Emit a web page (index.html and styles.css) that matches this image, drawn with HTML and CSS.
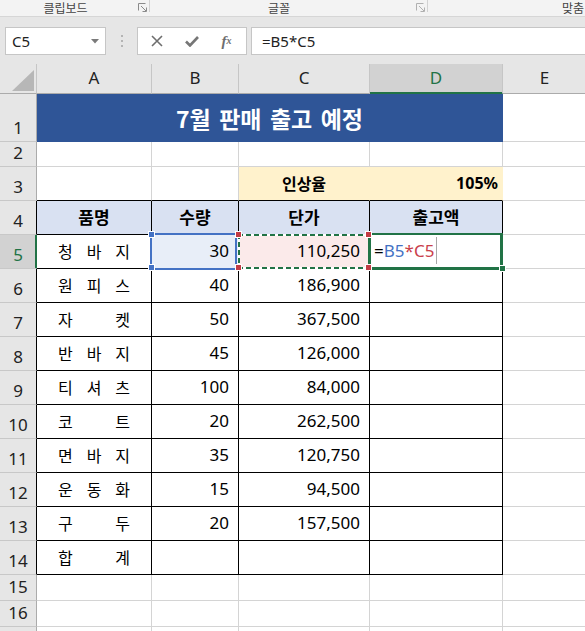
FILE: index.html
```html
<!DOCTYPE html>
<html lang="ko">
<head>
<meta charset="utf-8">
<title>7월 판매 출고 예정</title>
<link rel="stylesheet" href="styles.css">
</head>
<body>
<div class="ribbon">
  <div class="grp g1"><span class="lbl">클립보드</span><svg class="launch" width="9" height="9" viewBox="0 0 9 9"><path d="M0.5 7.5V0.5H7.5" fill="none" stroke="#8a8a8a"/><path d="M3 3L8 8M8.5 4.5V8.5H4.5" fill="none" stroke="#8a8a8a"/></svg><span class="sep"></span></div>
  <div class="grp g2"><span class="lbl">글꼴</span><svg class="launch" width="9" height="9" viewBox="0 0 9 9"><path d="M0.5 7.5V0.5H7.5" fill="none" stroke="#b0b0b0"/><path d="M3 3L8 8M8.5 4.5V8.5H4.5" fill="none" stroke="#b0b0b0"/></svg><span class="sep"></span></div>
  <div class="grp g3"><span class="lbl">맞춤</span></div>
</div>
<div class="fbar">
  <div class="namebox"><span class="nbtext">C5</span><svg width="8" height="5" viewBox="0 0 8 5"><path d="M0 0H8L4 4.5Z" fill="#7a7a7a"/></svg></div>
  <div class="dots"><svg width="2" height="12" viewBox="0 0 2 12"><rect x="0" y="0" width="2" height="2" fill="#b4b4b4"/><rect x="0" y="5" width="2" height="2" fill="#b4b4b4"/><rect x="0" y="10" width="2" height="2" fill="#b4b4b4"/></svg></div>
  <div class="fbtns">
    <span class="slot"><svg width="12" height="12" viewBox="0 0 12 12"><path d="M1 1L11 11M11 1L1 11" stroke="#6e6e6e" stroke-width="1.6" fill="none"/></svg></span>
    <span class="slot"><svg width="14" height="11" viewBox="0 0 14 11"><path d="M1 5.5L5 9.5L13 1" stroke="#767676" stroke-width="2.6" fill="none"/></svg></span>
    <span class="slot fx"><i>f</i><sub>x</sub></span>
  </div>
  <div class="finput">=B5*C5</div>
</div>
<div class="sheet">
  <!-- column headers -->
  <div class="c corner"><svg width="22" height="21" viewBox="0 0 22 21"><path d="M22 0V21H0Z" fill="#b7b7b7"/></svg></div>
  <div class="c ch">A</div>
  <div class="c ch">B</div>
  <div class="c ch">C</div>
  <div class="c ch sel">D</div>
  <div class="c ch">E</div>

  <!-- row 1 -->
  <div class="c rh">1</div>
  <div class="c title">7월 판매 출고 예정</div>
  <div class="c"></div>

  <!-- row 2 -->
  <div class="c rh">2</div>
  <div class="c"></div><div class="c"></div><div class="c"></div><div class="c"></div><div class="c"></div>

  <!-- row 3 -->
  <div class="c rh">3</div>
  <div class="c top"></div>
  <div class="c top"></div>
  <div class="c yl ylc">인상율</div>
  <div class="c yl yld">105%</div>
  <div class="c"></div>

  <!-- row 4 -->
  <div class="c rh tb">4</div>
  <div class="c th">품명</div>
  <div class="c th">수량</div>
  <div class="c th">단가</div>
  <div class="c th">출고액</div>
  <div class="c"></div>

  <!-- row 5 -->
  <div class="c rh tb sel">5</div>
  <div class="c t dist"><span>청</span><span>바</span><span>지</span></div>
  <div class="c t nm refb">30
    <span class="frame-b"></span>
    <span class="sq sq-b tl"></span><span class="sq sq-b bl"></span>
  </div>
  <div class="c t nm refc">110,250
    <span class="ants"></span>
    <span class="sq sq-c tl"></span><span class="sq sq-c tr"></span><span class="sq sq-c bl"></span><span class="sq sq-c br"></span>
  </div>
  <div class="c t act"><span class="fm">=<span class="rb">B5</span><span class="rc">*C5</span></span><span class="caret"></span>
    <span class="frame-d"></span><span class="handle"></span>
  </div>
  <div class="c"></div>

  <!-- row 6 -->
  <div class="c rh tb">6</div>
  <div class="c t dist"><span>원</span><span>피</span><span>스</span></div>
  <div class="c t nm">40</div>
  <div class="c t nm">186,900</div>
  <div class="c t"></div>
  <div class="c"></div>

  <!-- row 7 -->
  <div class="c rh tb">7</div>
  <div class="c t dist"><span>자</span><span>켓</span></div>
  <div class="c t nm">50</div>
  <div class="c t nm">367,500</div>
  <div class="c t"></div>
  <div class="c"></div>

  <!-- row 8 -->
  <div class="c rh tb">8</div>
  <div class="c t dist"><span>반</span><span>바</span><span>지</span></div>
  <div class="c t nm">45</div>
  <div class="c t nm">126,000</div>
  <div class="c t"></div>
  <div class="c"></div>

  <!-- row 9 -->
  <div class="c rh tb">9</div>
  <div class="c t dist"><span>티</span><span>셔</span><span>츠</span></div>
  <div class="c t nm">100</div>
  <div class="c t nm">84,000</div>
  <div class="c t"></div>
  <div class="c"></div>

  <!-- row 10 -->
  <div class="c rh tb">10</div>
  <div class="c t dist"><span>코</span><span>트</span></div>
  <div class="c t nm">20</div>
  <div class="c t nm">262,500</div>
  <div class="c t"></div>
  <div class="c"></div>

  <!-- row 11 -->
  <div class="c rh tb">11</div>
  <div class="c t dist"><span>면</span><span>바</span><span>지</span></div>
  <div class="c t nm">35</div>
  <div class="c t nm">120,750</div>
  <div class="c t"></div>
  <div class="c"></div>

  <!-- row 12 -->
  <div class="c rh tb">12</div>
  <div class="c t dist"><span>운</span><span>동</span><span>화</span></div>
  <div class="c t nm">15</div>
  <div class="c t nm">94,500</div>
  <div class="c t"></div>
  <div class="c"></div>

  <!-- row 13 -->
  <div class="c rh tb">13</div>
  <div class="c t dist"><span>구</span><span>두</span></div>
  <div class="c t nm">20</div>
  <div class="c t nm">157,500</div>
  <div class="c t"></div>
  <div class="c"></div>

  <!-- row 14 -->
  <div class="c rh tb">14</div>
  <div class="c t dist"><span>합</span><span>계</span></div>
  <div class="c t nm"></div>
  <div class="c t nm"></div>
  <div class="c t"></div>
  <div class="c"></div>

  <!-- row 15 -->
  <div class="c rh">15</div>
  <div class="c"></div><div class="c"></div><div class="c"></div><div class="c"></div><div class="c"></div>

  <!-- row 16 -->
  <div class="c rh">16</div>
  <div class="c"></div><div class="c"></div><div class="c"></div><div class="c"></div><div class="c"></div>

  <!-- row 17 (only its top edge is visible) -->
  <div class="c rh"></div>
  <div class="c"></div><div class="c"></div><div class="c"></div><div class="c"></div><div class="c"></div>
</div>
</body>
</html>
```
FILE: styles.css
```css
* { box-sizing: border-box; }
html, body { margin: 0; padding: 0; }
body {
  width: 585px;
  height: 631px;
  overflow: hidden;
  background: #ffffff;
  font-family: "Noto Sans", "Noto Sans CJK KR", sans-serif;
  color: #000;
}

/* ribbon group labels */
.ribbon {
  display: flex;
  height: 17px;
  background: #f3f3f3;
  border-bottom: 1px solid #d6d6d6;
}
.grp { display: flex; align-items: flex-start; flex: none; }
.g1 { width: 150px; }
.g2 { width: 278px; }
.g3 { flex: 1; min-width: 0; }
.lbl {
  flex: 1;
  text-align: center;
  font-family: "Noto Sans CJK KR", sans-serif;
  font-size: 12px;
  line-height: 16px;
  height: 16px;
  color: #444;
  white-space: nowrap;
}
.g1 .lbl { padding-right: 7px; }
.g2 .lbl { padding-right: 8px; }
.g3 .lbl { text-align: left; padding-left: 134px; }
.launch { flex: none; margin-top: 3px; margin-right: 2px; }
.sep { flex: none; width: 1px; height: 12px; background: #d2d2d2; }

/* formula bar */
.fbar {
  display: flex;
  align-items: flex-start;
  height: 47px;
  background: #e6e6e6;
  padding: 10px 0 0 5px;
}
.namebox {
  flex: none;
  width: 101px;
  height: 28px;
  background: #fff;
  border: 1px solid #c6c6c6;
  display: flex;
  align-items: center;
  justify-content: space-between;
  padding: 0 6px 0 6px;
}
.nbtext { font-size: 15px; color: #222; }
.dots {
  flex: none;
  width: 31px;
  height: 28px;
  display: flex;
  align-items: center;
  justify-content: center;
}
.fbtns {
  flex: none;
  width: 110px;
  height: 28px;
  background: #fff;
  border: 1px solid #c6c6c6;
  display: flex;
  align-items: center;
  padding-left: 1px;
}
.slot {
  width: 35px;
  height: 26px;
  display: flex;
  align-items: center;
  justify-content: center;
}
.fx {
  font-family: "Liberation Serif", serif;
  color: #6e6e6e;
  font-size: 15px;
  font-weight: 700;
  line-height: 1;
}
.fx sub { font-size: 10px; font-style: italic; vertical-align: -1px; }
.finput {
  flex: 1;
  margin-left: 4px;
  height: 28px;
  background: #fff;
  border: 1px solid #c6c6c6;
  border-right: none;
  font-size: 15px;
  line-height: 26px;
  padding-left: 10px;
  color: #222;
}

/* sheet grid */
.sheet {
  display: grid;
  grid-template-columns: 37px 115px 87px 131px 133px 84px;
  grid-template-rows: 30px 48px 25px repeat(12, 34px) 26px 26px 26px;
  width: 587px;
}
.c {
  position: relative;
  display: flex;
  align-items: center;
  border-right: 1px solid #d4d4d4;
  border-bottom: 1px solid #d4d4d4;
  font-size: 17px;
  white-space: nowrap;
  padding-bottom: 2px;
}
.corner {
  background: #e6e6e6;
  border-right-color: #c6c6c6;
  border-bottom-color: #ababab;
  justify-content: flex-end;
  align-items: flex-end;
  padding: 0 2px 2px 0;
}
.ch {
  background: #e6e6e6;
  border-right-color: #c6c6c6;
  border-bottom-color: #ababab;
  justify-content: center;
  color: #222;
  padding-bottom: 3px;
}
.ch.sel {
  background: #d2d2d2;
  color: #217346;
  border-bottom-color: #217346;
  box-shadow: inset 0 -1px 0 #217346;
}
.rh {
  background: #e6e6e6;
  border-right-color: #ababab;
  border-bottom-color: #c8c8c8;
  justify-content: center;
  align-items: flex-end;
  line-height: 20px;
  padding-bottom: 3px;
  color: #222;
}
.rh.tb { border-right-color: #000; }
.rh.sel {
  background: #d2d2d2;
  color: #217346;
  border-right-color: #217346;
  box-shadow: inset -1px 0 0 #217346;
}

.title {
  grid-column: span 4;
  background: #2f5597;
  border-right-color: #2f5597;
  border-bottom-color: #2f5597;
  color: #fff;
  font-family: "Noto Sans CJK KR", sans-serif;
  font-weight: 700;
  font-size: 23px;
  justify-content: center;
  padding-bottom: 0;
  word-spacing: 2px;
}
.top { border-bottom-color: #000; }
.yl {
  background: #fff2cc;
  border-right-color: #fff2cc;
  border-bottom-color: #000;
  font-weight: 700;
  font-size: 16px;
}
.ylc { justify-content: center; font-family: "Noto Sans CJK KR", sans-serif; }
.yld { justify-content: flex-end; padding-right: 4px; }
.th {
  background: #d9e1f2;
  border-right-color: #000;
  border-bottom-color: #000;
  font-family: "Noto Sans CJK KR", sans-serif;
  font-weight: 700;
  justify-content: center;
  padding-bottom: 3px;
}
.t { border-right-color: #000; border-bottom-color: #000; }
.nm { justify-content: flex-end; padding-right: 9px; }
.dist {
  justify-content: space-between;
  padding: 0 21px 2px 21px;
  font-family: "Noto Sans CJK KR", sans-serif;
  font-size: 16px;
}

/* references in B5 / C5 */
.refb { background: #e8eef8; }
.refc { background: #fbeaea; }
.frame-b {
  position: absolute;
  left: -2px;
  top: -2px;
  width: 87px;
  height: 37px;
  border: 2px solid #4472c4;
  z-index: 2;
}
.ants {
  position: absolute;
  left: -1px;
  top: -1px;
  width: 132px;
  height: 35px;
  z-index: 3;
  background:
    repeating-linear-gradient(90deg, #217346 0 5px, #ffffff 5px 8px) top left / 100% 2px no-repeat,
    repeating-linear-gradient(90deg, #217346 0 5px, #ffffff 5px 8px) bottom left / 100% 2px no-repeat,
    repeating-linear-gradient(180deg, #217346 0 5px, #ffffff 5px 8px) top left / 2px 100% no-repeat,
    repeating-linear-gradient(180deg, #217346 0 5px, #ffffff 5px 8px) top right / 2px 100% no-repeat;
}
.sq {
  position: absolute;
  width: 7px;
  height: 7px;
  border: 1px solid #fff;
  z-index: 5;
}
.sq-b { background: #4472c4; }
.sq-c { background: #c23b45; }
.sq-b.tl { left: -4px; top: -4px; }
.sq-b.bl { left: -4px; bottom: -3px; }
.sq-c.tl { left: -4px; top: -4px; }
.sq-c.tr { right: -3px; top: -4px; }
.sq-c.bl { left: -4px; bottom: -3px; }
.sq-c.br { right: -3px; bottom: -3px; }

/* active cell D5 */
.act { padding-left: 4px; }
.fm { font-size: 17px; }
.rb { color: #4472c4; }
.rc { color: #c9404a; }
.caret {
  display: inline-block;
  width: 1px;
  height: 27px;
  background: #a8a8a8;
  margin-left: 2px;
}
.frame-d {
  position: absolute;
  left: -2px;
  top: -2px;
  width: 135px;
  height: 37px;
  border: 3px solid #217346;
  border-top-width: 2px;
  z-index: 4;
}
.handle {
  position: absolute;
  left: 129px;
  top: 30px;
  width: 7px;
  height: 7px;
  background: #217346;
  border: 1px solid #fff;
  z-index: 6;
}
```
